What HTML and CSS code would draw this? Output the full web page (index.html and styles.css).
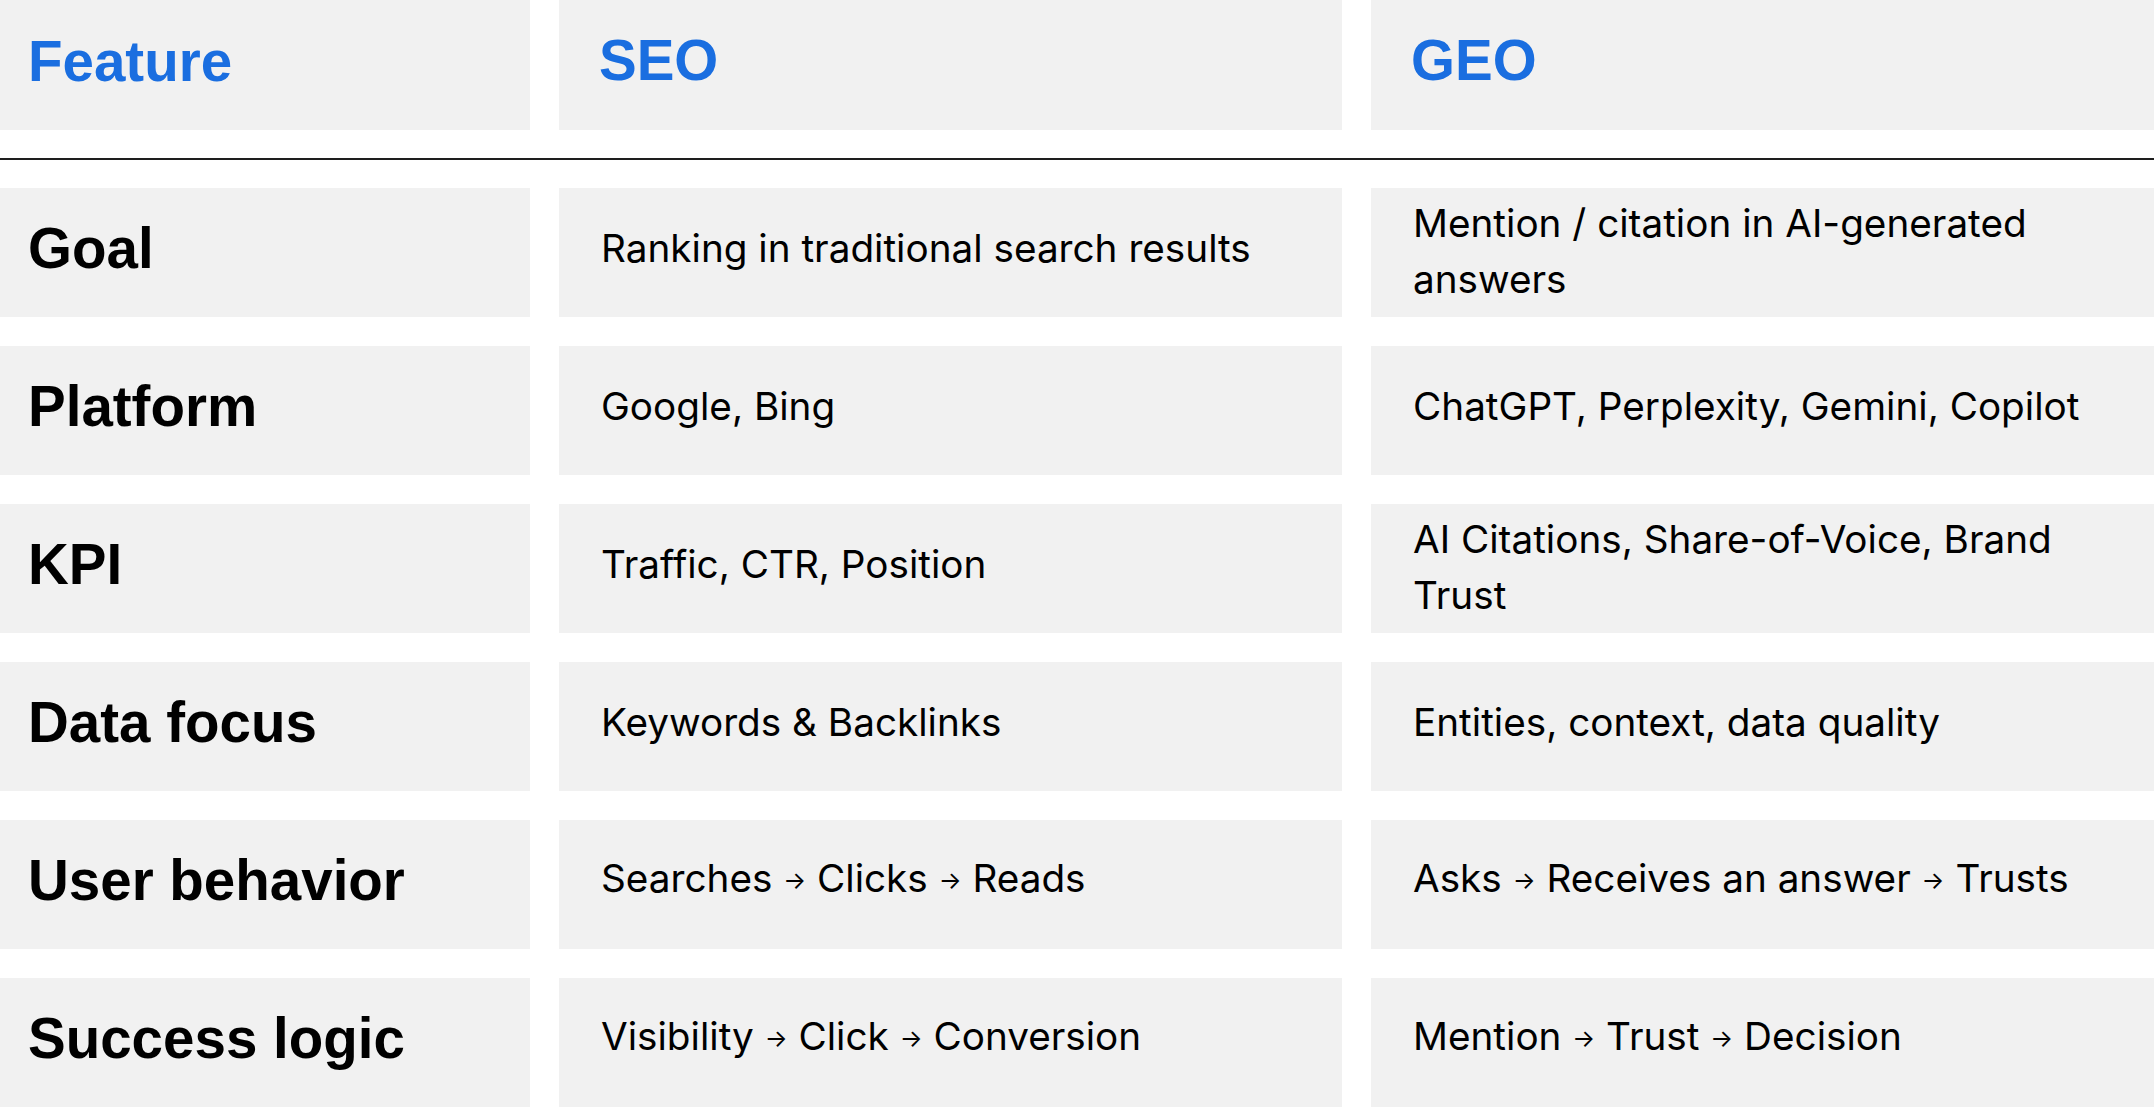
FILE: index.html
```html
<!DOCTYPE html>
<html lang="en">
<head>
<meta charset="utf-8">
<title>SEO vs GEO</title>
<link rel="stylesheet" href="styles.css">
</head>
<body>
<div class="table">
  <div class="row head">
    <div class="cell label"><span>Feature</span></div>
    <div class="cell value"><span>SEO</span></div>
    <div class="cell value"><span>GEO</span></div>
  </div>
  <div class="divider"></div>
  <div class="row">
    <div class="cell label"><span>Goal</span></div>
    <div class="cell value"><span>Ranking in traditional search results</span></div>
    <div class="cell value two"><span>Mention / citation in AI-generated answers</span></div>
  </div>
  <div class="row">
    <div class="cell label"><span>Platform</span></div>
    <div class="cell value"><span>Google, Bing</span></div>
    <div class="cell value"><span>ChatGPT, Perplexity, Gemini, Copilot</span></div>
  </div>
  <div class="row">
    <div class="cell label"><span>KPI</span></div>
    <div class="cell value"><span>Traffic, CTR, Position</span></div>
    <div class="cell value two"><span>AI Citations, Share-of-Voice, Brand Trust</span></div>
  </div>
  <div class="row">
    <div class="cell label"><span>Data focus</span></div>
    <div class="cell value"><span>Keywords &amp; Backlinks</span></div>
    <div class="cell value"><span>Entities, context, data quality</span></div>
  </div>
  <div class="row">
    <div class="cell label"><span>User behavior</span></div>
    <div class="cell value"><span>Searches <span class="arrow">→</span> Clicks <span class="arrow">→</span> Reads</span></div>
    <div class="cell value"><span>Asks <span class="arrow">→</span> Receives an answer <span class="arrow">→</span> Trusts</span></div>
  </div>
  <div class="row">
    <div class="cell label"><span>Success logic</span></div>
    <div class="cell value"><span>Visibility <span class="arrow">→</span> Click <span class="arrow">→</span> Conversion</span></div>
    <div class="cell value"><span>Mention <span class="arrow">→</span> Trust <span class="arrow">→</span> Decision</span></div>
  </div>
</div>
</body>
</html>
```

FILE: styles.css
```css
html, body {
  margin: 0;
  padding: 0;
  background: #ffffff;
}

body {
  font-family: Inter, "Liberation Sans", Arial, sans-serif;
  color: #000;
  overflow: hidden;
}

.table {
  display: flex;
  flex-direction: column;
  gap: 29px;
  width: 2154px;
}

.row {
  display: grid;
  grid-template-columns: 530px 1fr 1fr;
  column-gap: 29px;
  height: 129px;
}

.row.head {
  height: 130px;
}

.cell {
  background: #f1f1f1;
  display: flex;
  align-items: center;
  box-sizing: border-box;
}

.label {
  padding: 0 20px 8px 28px;
  font-family: "Liberation Sans", Arial, sans-serif;
  font-weight: 700;
  font-size: 56.5px;
  color: #000;
}

.value {
  padding: 0 36px 9px 42px;
  font-size: 38.7px;
  line-height: 56px;
  color: #000;
}

.value.two {
  padding-bottom: 4px;
}

.arrow {
  font-size: 0.62em;
  vertical-align: 0.12em;
}

.head .cell {
  font-family: "Liberation Sans", Arial, sans-serif;
  font-weight: 700;
  font-size: 56.5px;
  color: #1a6ee0;
  padding-bottom: 8px;
}

.head .value {
  padding-left: 40px;
}

.divider {
  height: 2px;
  background: #1e1e1e;
  margin: -1px 0 -1px;
}
```
